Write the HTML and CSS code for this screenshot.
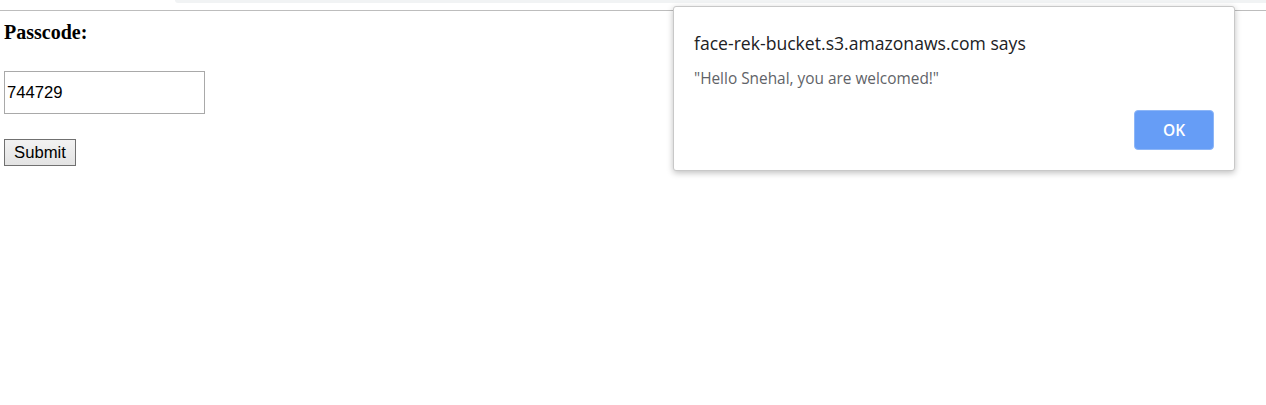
FILE: index.html
```html
<!DOCTYPE html>
<html>
<head>
<meta charset="utf-8">
<title>Passcode</title>
<link rel="stylesheet" href="styles.css">
</head>
<body>
<div class="chrome"><div class="tabstrip"></div></div>
<main class="page">
  <div class="label">Passcode:</div>
  <input class="code" type="text" value="744729">
  <button class="submit" type="button">Submit</button>
</main>
<div class="dialog">
  <div class="dialog-title">face-rek-bucket.s3.amazonaws.com says</div>
  <div class="dialog-msg">"Hello Snehal, you are welcomed!"</div>
  <div class="dialog-actions"><button class="ok" type="button">OK</button></div>
</div>
</body>
</html>
```
FILE: styles.css
```css
html, body {
  margin: 0;
  padding: 0;
  background: #fff;
}
body {
  width: 1266px;
  height: 405px;
  overflow: hidden;
  position: relative;
}
.chrome {
  height: 10px;
  border-bottom: 1px solid #bdbdbd;
}
.tabstrip {
  height: 3px;
  margin-left: 175px;
  background: #f1f3f4;
  border-bottom-left-radius: 10px;
}
.page {
  display: flex;
  flex-direction: column;
  align-items: flex-start;
  padding: 0 4px;
}
.label {
  font-family: "Liberation Serif", "Times New Roman", serif;
  font-weight: bold;
  font-size: 20px;
  line-height: 23px;
  color: #000;
  margin-top: 10px;
}
.code {
  box-sizing: border-box;
  width: 201px;
  height: 43px;
  margin-top: 27px;
  border: 1px solid #a9a9a9;
  padding: 1px 2px;
  font-family: "Liberation Sans", Arial, sans-serif;
  font-size: 16.67px;
  color: #000;
  background: #fff;
  outline: none;
}
.submit {
  box-sizing: border-box;
  height: 27px;
  width: 72px;
  margin-top: 25px;
  padding: 0 8px;
  border: 1px solid #707070;
  border-radius: 0;
  background: linear-gradient(#f2f2f2, #e3e3e3);
  font-family: "Liberation Sans", Arial, sans-serif;
  font-size: 16.67px;
  color: #000;
}
.dialog {
  position: absolute;
  left: 673px;
  top: 6px;
  width: 562px;
  height: 165px;
  box-sizing: border-box;
  background: #fff;
  border: 1px solid #c8c8c8;
  border-radius: 3px;
  box-shadow: 0 2px 6px rgba(0,0,0,0.25);
  padding: 23px 20px 0 20px;
  display: flex;
  flex-direction: column;
  font-family: "Open Sans", "Noto Sans", sans-serif;
}
.dialog-title {
  font-size: 17.6px;
  line-height: 26px;
  color: #202124;
}
.dialog-msg {
  margin-top: 12px;
  font-size: 15.4px;
  line-height: 22px;
  color: #5f6368;
}
.dialog-actions {
  display: flex;
  justify-content: flex-end;
  margin-top: 20px;
}
.ok {
  width: 80px;
  height: 40px;
  box-sizing: border-box;
  background: #669df6;
  border: 1px solid #8db6f7;
  border-radius: 4px;
  color: #fff;
  font-family: "Open Sans", "Noto Sans", sans-serif;
  font-weight: 600;
  font-size: 15.5px;
}
```
